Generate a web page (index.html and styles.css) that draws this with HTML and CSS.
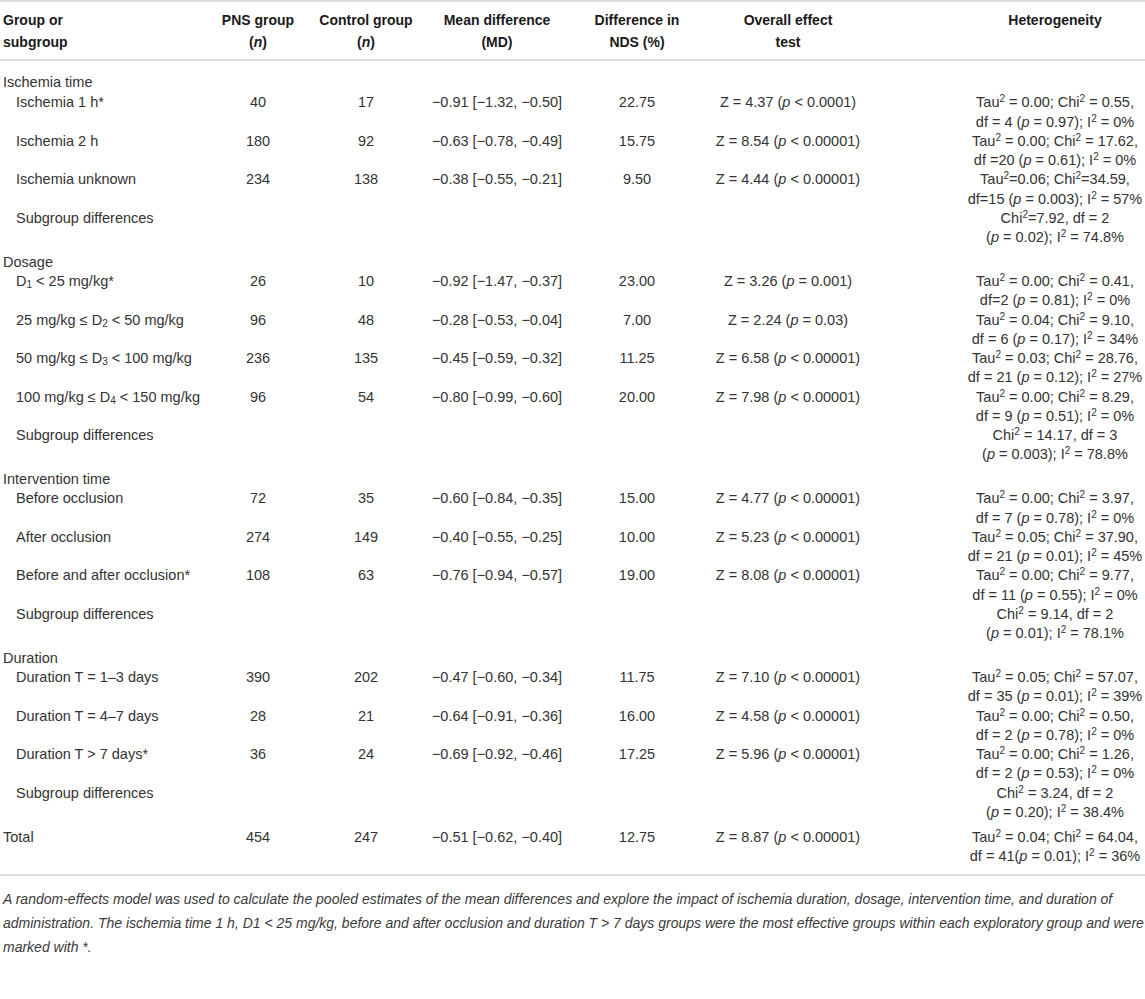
FILE: index.html
```html
<!DOCTYPE html>
<html lang="en">
<head>
    <meta charset="UTF-8">
    <title>Subgroup analysis of NDS</title>
    <link rel="stylesheet" href="styles.css">
</head>
<body>
    <div class="table-wrap">
        <table class="stats-table">
            <colgroup>
                <col class="c-group">
                <col class="c-pns">
                <col class="c-ctrl">
                <col class="c-md">
                <col class="c-nds">
                <col class="c-eff">
                <col class="c-het">
            </colgroup>
            <thead>
                <tr>
                    <th class="left">Group or<br>subgroup</th>
                    <th>PNS group<br>(<i>n</i>)</th>
                    <th>Control group<br>(<i>n</i>)</th>
                    <th>Mean difference<br>(MD)</th>
                    <th>Difference in<br>NDS (%)</th>
                    <th class="eff">Overall effect<br>test</th>
                    <th class="het">Heterogeneity</th>
                </tr>
            </thead>
            <tbody>
                <!-- Ischemia time -->
                <tr class="cat-row first">
                    <td class="left" colspan="7">Ischemia time</td>
                </tr>
                <tr>
                    <td class="left sub">Ischemia 1 h*</td>
                    <td>40</td>
                    <td>17</td>
                    <td>&minus;0.91 [&minus;1.32, &minus;0.50]</td>
                    <td>22.75</td>
                    <td class="eff">Z = 4.37 (<i>p</i> &lt; 0.0001)</td>
                    <td class="het">Tau<sup>2</sup> = 0.00; Chi<sup>2</sup> = 0.55,<br>df = 4 (<i>p</i> = 0.97); I<sup>2</sup> = 0%</td>
                </tr>
                <tr>
                    <td class="left sub">Ischemia 2 h</td>
                    <td>180</td>
                    <td>92</td>
                    <td>&minus;0.63 [&minus;0.78, &minus;0.49]</td>
                    <td>15.75</td>
                    <td class="eff">Z = 8.54 (<i>p</i> &lt; 0.00001)</td>
                    <td class="het">Tau<sup>2</sup> = 0.00; Chi<sup>2</sup> = 17.62,<br>df =20 (<i>p</i> = 0.61); I<sup>2</sup> = 0%</td>
                </tr>
                <tr>
                    <td class="left sub">Ischemia unknown</td>
                    <td>234</td>
                    <td>138</td>
                    <td>&minus;0.38 [&minus;0.55, &minus;0.21]</td>
                    <td>9.50</td>
                    <td class="eff">Z = 4.44 (<i>p</i> &lt; 0.00001)</td>
                    <td class="het">Tau<sup>2</sup>=0.06; Chi<sup>2</sup>=34.59,<br>df=15 (<i>p</i> = 0.003); I<sup>2</sup> = 57%</td>
                </tr>
                <tr class="diff-row">
                    <td class="left sub">Subgroup differences</td>
                    <td></td>
                    <td></td>
                    <td></td>
                    <td></td>
                    <td class="eff"></td>
                    <td class="het">Chi<sup>2</sup>=7.92, df = 2<br>(<i>p</i> = 0.02); I<sup>2</sup> = 74.8%</td>
                </tr>

                <!-- Dosage -->
                <tr class="cat-row">
                    <td class="left" colspan="7">Dosage</td>
                </tr>
                <tr>
                    <td class="left sub">D<sub>1</sub> &lt; 25 mg/kg*</td>
                    <td>26</td>
                    <td>10</td>
                    <td>&minus;0.92 [&minus;1.47, &minus;0.37]</td>
                    <td>23.00</td>
                    <td class="eff">Z = 3.26 (<i>p</i> = 0.001)</td>
                    <td class="het">Tau<sup>2</sup> = 0.00; Chi<sup>2</sup> = 0.41,<br>df=2 (<i>p</i> = 0.81); I<sup>2</sup> = 0%</td>
                </tr>
                <tr>
                    <td class="left sub">25 mg/kg &le; D<sub>2</sub> &lt; 50 mg/kg</td>
                    <td>96</td>
                    <td>48</td>
                    <td>&minus;0.28 [&minus;0.53, &minus;0.04]</td>
                    <td>7.00</td>
                    <td class="eff">Z = 2.24 (<i>p</i> = 0.03)</td>
                    <td class="het">Tau<sup>2</sup> = 0.04; Chi<sup>2</sup> = 9.10,<br>df = 6 (<i>p</i> = 0.17); I<sup>2</sup> = 34%</td>
                </tr>
                <tr>
                    <td class="left sub">50 mg/kg &le; D<sub>3</sub> &lt; 100 mg/kg</td>
                    <td>236</td>
                    <td>135</td>
                    <td>&minus;0.45 [&minus;0.59, &minus;0.32]</td>
                    <td>11.25</td>
                    <td class="eff">Z = 6.58 (<i>p</i> &lt; 0.00001)</td>
                    <td class="het">Tau<sup>2</sup> = 0.03; Chi<sup>2</sup> = 28.76,<br>df = 21 (<i>p</i> = 0.12); I<sup>2</sup> = 27%</td>
                </tr>
                <tr>
                    <td class="left sub">100 mg/kg &le; D<sub>4</sub> &lt; 150 mg/kg</td>
                    <td>96</td>
                    <td>54</td>
                    <td>&minus;0.80 [&minus;0.99, &minus;0.60]</td>
                    <td>20.00</td>
                    <td class="eff">Z = 7.98 (<i>p</i> &lt; 0.00001)</td>
                    <td class="het">Tau<sup>2</sup> = 0.00; Chi<sup>2</sup> = 8.29,<br>df = 9 (<i>p</i> = 0.51); I<sup>2</sup> = 0%</td>
                </tr>
                <tr class="diff-row">
                    <td class="left sub">Subgroup differences</td>
                    <td></td>
                    <td></td>
                    <td></td>
                    <td></td>
                    <td class="eff"></td>
                    <td class="het">Chi<sup>2</sup> = 14.17, df = 3<br>(<i>p</i> = 0.003); I<sup>2</sup> = 78.8%</td>
                </tr>

                <!-- Intervention time -->
                <tr class="cat-row">
                    <td class="left" colspan="7">Intervention time</td>
                </tr>
                <tr>
                    <td class="left sub">Before occlusion</td>
                    <td>72</td>
                    <td>35</td>
                    <td>&minus;0.60 [&minus;0.84, &minus;0.35]</td>
                    <td>15.00</td>
                    <td class="eff">Z = 4.77 (<i>p</i> &lt; 0.00001)</td>
                    <td class="het">Tau<sup>2</sup> = 0.00; Chi<sup>2</sup> = 3.97,<br>df = 7 (<i>p</i> = 0.78); I<sup>2</sup> = 0%</td>
                </tr>
                <tr>
                    <td class="left sub">After occlusion</td>
                    <td>274</td>
                    <td>149</td>
                    <td>&minus;0.40 [&minus;0.55, &minus;0.25]</td>
                    <td>10.00</td>
                    <td class="eff">Z = 5.23 (<i>p</i> &lt; 0.00001)</td>
                    <td class="het">Tau<sup>2</sup> = 0.05; Chi<sup>2</sup> = 37.90,<br>df = 21 (<i>p</i> = 0.01); I<sup>2</sup> = 45%</td>
                </tr>
                <tr>
                    <td class="left sub">Before and after occlusion*</td>
                    <td>108</td>
                    <td>63</td>
                    <td>&minus;0.76 [&minus;0.94, &minus;0.57]</td>
                    <td>19.00</td>
                    <td class="eff">Z = 8.08 (<i>p</i> &lt; 0.00001)</td>
                    <td class="het">Tau<sup>2</sup> = 0.00; Chi<sup>2</sup> = 9.77,<br>df = 11 (<i>p</i> = 0.55); I<sup>2</sup> = 0%</td>
                </tr>
                <tr class="diff-row">
                    <td class="left sub">Subgroup differences</td>
                    <td></td>
                    <td></td>
                    <td></td>
                    <td></td>
                    <td class="eff"></td>
                    <td class="het">Chi<sup>2</sup> = 9.14, df = 2<br>(<i>p</i> = 0.01); I<sup>2</sup> = 78.1%</td>
                </tr>

                <!-- Duration -->
                <tr class="cat-row">
                    <td class="left" colspan="7">Duration</td>
                </tr>
                <tr>
                    <td class="left sub">Duration T = 1&ndash;3 days</td>
                    <td>390</td>
                    <td>202</td>
                    <td>&minus;0.47 [&minus;0.60, &minus;0.34]</td>
                    <td>11.75</td>
                    <td class="eff">Z = 7.10 (<i>p</i> &lt; 0.00001)</td>
                    <td class="het">Tau<sup>2</sup> = 0.05; Chi<sup>2</sup> = 57.07,<br>df = 35 (<i>p</i> = 0.01); I<sup>2</sup> = 39%</td>
                </tr>
                <tr>
                    <td class="left sub">Duration T = 4&ndash;7 days</td>
                    <td>28</td>
                    <td>21</td>
                    <td>&minus;0.64 [&minus;0.91, &minus;0.36]</td>
                    <td>16.00</td>
                    <td class="eff">Z = 4.58 (<i>p</i> &lt; 0.00001)</td>
                    <td class="het">Tau<sup>2</sup> = 0.00; Chi<sup>2</sup> = 0.50,<br>df = 2 (<i>p</i> = 0.78); I<sup>2</sup> = 0%</td>
                </tr>
                <tr>
                    <td class="left sub">Duration T &gt; 7 days*</td>
                    <td>36</td>
                    <td>24</td>
                    <td>&minus;0.69 [&minus;0.92, &minus;0.46]</td>
                    <td>17.25</td>
                    <td class="eff">Z = 5.96 (<i>p</i> &lt; 0.00001)</td>
                    <td class="het">Tau<sup>2</sup> = 0.00; Chi<sup>2</sup> = 1.26,<br>df = 2 (<i>p</i> = 0.53); I<sup>2</sup> = 0%</td>
                </tr>
                <tr class="diff-row">
                    <td class="left sub">Subgroup differences</td>
                    <td></td>
                    <td></td>
                    <td></td>
                    <td></td>
                    <td class="eff"></td>
                    <td class="het">Chi<sup>2</sup> = 3.24, df = 2<br>(<i>p</i> = 0.20); I<sup>2</sup> = 38.4%</td>
                </tr>

                <!-- Total -->
                <tr class="total-row">
                    <td class="left">Total</td>
                    <td>454</td>
                    <td>247</td>
                    <td>&minus;0.51 [&minus;0.62, &minus;0.40]</td>
                    <td>12.75</td>
                    <td class="eff">Z = 8.87 (<i>p</i> &lt; 0.00001)</td>
                    <td class="het">Tau<sup>2</sup> = 0.04; Chi<sup>2</sup> = 64.04,<br>df = 41(<i>p</i> = 0.01); I<sup>2</sup> = 36%</td>
                </tr>
            </tbody>
        </table>

        <p class="footnote">A random-effects model was used to calculate the pooled estimates of the mean differences and explore the impact of ischemia duration, dosage, intervention time, and duration of<br>administration. The ischemia time 1 h, D1 &lt; 25 mg/kg, before and after occlusion and duration T &gt; 7 days groups were the most effective groups within each exploratory group and were<br>marked with *.</p>
    </div>
</body>
</html>
```

FILE: styles.css
```css
/* Page */
body {
    margin: 0;
    background: #fff;
    color: #333;
    font-family: 'Liberation Sans', Arial, sans-serif;
}

.table-wrap {
    width: 1145px;
}

/* Table */
.stats-table {
    width: 100%;
    table-layout: fixed;
    border-collapse: collapse;
    font-size: 14px;
}

.c-group { width: 205px; }
.c-pns { width: 106px; }
.c-ctrl { width: 110px; }
.c-md { width: 152px; }
.c-nds { width: 128px; }
.c-eff { width: 174px; }
.c-het { width: 270px; }

.stats-table th,
.stats-table td {
    padding: 0;
    text-align: center;
    vertical-align: top;
    white-space: nowrap;
}

.stats-table .left {
    text-align: left;
    padding-left: 3px;
}

.stats-table .sub {
    padding-left: 16px;
}

.stats-table .het {
    padding-left: 90px;
}

/* Header */
.stats-table thead tr {
    border-top: 2px solid #dcdcdc;
    border-bottom: 2px solid #dcdcdc;
}

.stats-table th {
    font-weight: bold;
    color: #1a1a1a;
    line-height: 22px;
    padding-top: 7px;
    padding-bottom: 6px;
}

/* Body rows */
.stats-table td {
    font-size: 14.5px;
    line-height: 19.25px;
}

.cat-row.first td {
    padding-top: 12px;
    padding-bottom: 1px;
}

.diff-row td {
    padding-bottom: 5.5px;
}

.total-row td {
    padding-bottom: 8px;
}

.stats-table tbody {
    border-bottom: 2px solid #dcdcdc;
}

sup,
sub {
    font-size: 10px;
    line-height: 0;
}

sup {
    vertical-align: 5px;
}

sub {
    vertical-align: -2px;
}

/* Note under the table */
.footnote {
    margin: 11px 0 0;
    padding-left: 3px;
    font-size: 14px;
    font-style: italic;
    line-height: 24px;
    color: #3a3a3a;
    white-space: nowrap;
}
```
